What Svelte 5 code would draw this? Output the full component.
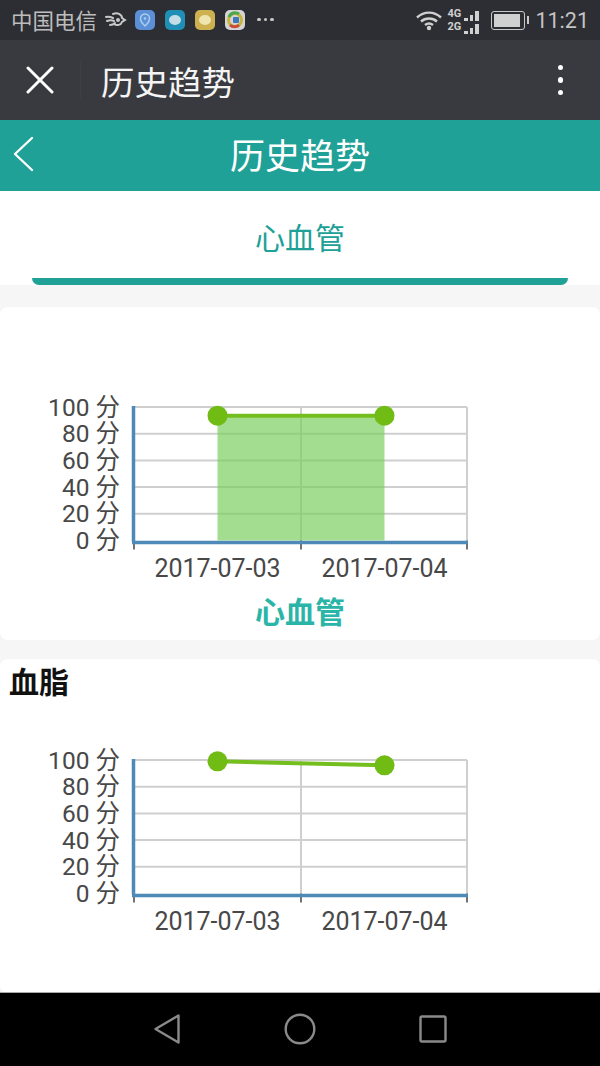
<script lang="ts">
  const LEVELS = [100, 80, 60, 40, 20, 0];
  const TOP = 20;
  const STEP = 26.7;
  const BASE = TOP + STEP * 5;
  const LEFT = 134;
  const MID = 301;
  const RIGHT = 467;
  const P1 = 217.5;
  const P2 = 384.5;

  const y = (v: number) => BASE - (v / 100) * STEP * 5;
</script>

{#snippet chart(a: number, b: number, area: boolean)}
  <svg class="chart" viewBox="0 0 600 200" width="600" height="200">
    {#each LEVELS as v, i}
      <text class="ylabel" x="120" y={TOP + STEP * i + 8.5} text-anchor="end">{v} 分</text>
      {#if v > 0}
        <line x1={LEFT} x2={RIGHT} y1={y(v)} y2={y(v)} class="grid" />
      {/if}
    {/each}
    <line x1={MID} x2={MID} y1={TOP} y2={BASE} class="grid" />
    <line x1={RIGHT} x2={RIGHT} y1={TOP} y2={BASE} class="grid" />
    {#if area}
      <rect x={P1} y={y(a)} width={P2 - P1} height={BASE - y(a)} fill="#77cd5c" opacity="0.68" />
    {/if}
    <line x1={LEFT} x2={LEFT} y1={BASE} y2={BASE + 9} class="tick" />
    <line x1={MID} x2={MID} y1={BASE} y2={BASE + 9} class="tick" />
    <line x1={RIGHT} x2={RIGHT} y1={BASE} y2={BASE + 9} class="tick" />
    <line x1="133.5" x2="133.5" y1={TOP - 1} y2={BASE + 1} class="axis" />
    <line x1="132" x2="468" y1={BASE + 2} y2={BASE + 2} class="axis" />
    <line x1={P1} x2={P2} y1={y(a)} y2={y(b)} class="series" />
    <circle cx={P1} cy={y(a)} r="10" fill="#70bb14" />
    <circle cx={P2} cy={y(b)} r="10" fill="#70bb14" />
    <text class="xlabel" x={P1} y={BASE + 36} text-anchor="middle">2017-07-03</text>
    <text class="xlabel" x={P2} y={BASE + 36} text-anchor="middle">2017-07-04</text>
  </svg>
{/snippet}

<div class="page">
  <div class="status">
    <span class="carrier">中国电信</span>
    <svg class="bird" width="22" height="16" viewBox="0 0 22 16">
      <path d="M1 5c3-1 5 0 7 1M2 9c3-1 5-1 7 0M5 13c2 0 4-1 5-2M8 2c5-2 9 1 9 4l3 2-3 2c-1 3-5 4-8 2" fill="none" stroke="#c8c8c8" stroke-width="2" stroke-linecap="round" />
      <circle cx="13" cy="8" r="2" fill="#c8c8c8" />
    </svg>
    <div class="apps">
      <span class="app blue">
        <svg width="12" height="14" viewBox="0 0 12 14"><path d="M6 1a4.500 4.500 0 0 1 4.500 4.500C10.500 9 6 13 6 13S1.500 9 1.500 5.500A4.500 4.500 0 0 1 6 1z" fill="none" stroke="#a8d0ee" stroke-width="1.500" /><circle cx="6" cy="5.500" r="1.300" fill="#a8d0ee" /></svg>
      </span>
      <span class="app cyan"><i class="bubble"></i></span>
      <span class="app yellow"><i class="bubble warm"></i></span>
      <span class="app tencent">
        <svg width="20" height="20" viewBox="0 0 20 20">
          <circle cx="10" cy="10" r="6.500" fill="none" stroke="#c9b53c" stroke-width="3" />
          <path d="M4 7a6.500 6.500 0 0 1 10-3" fill="none" stroke="#4da64d" stroke-width="3" />
          <path d="M5 15a6.500 6.500 0 0 0 9 0" fill="none" stroke="#c94f3a" stroke-width="3" />
          <rect x="8" y="7" width="6" height="6" rx="1" fill="#3f78b8" />
        </svg>
      </span>
    </div>
    <div class="more"><i></i><i></i><i></i></div>
    <div class="status-right">
      <svg width="28" height="22" viewBox="0 0 28 22">
        <path d="M2 8.500c7-6.500 17-6.500 24 0M6 12.500c4.500-4 11.500-4 16 0M10 16c2.500-2 5.500-2 8 0" fill="none" stroke="#d0d0d0" stroke-width="2.400" />
        <circle cx="14" cy="19" r="2.200" fill="#d0d0d0" />
      </svg>
      <div class="signal">
        <div class="sig-row"><span>4G</span><i style="height:3px"></i><i style="height:6px"></i><i style="height:10px"></i></div>
        <div class="sig-row"><span>2G</span><i style="height:3px"></i><i style="height:6px"></i><i style="height:10px"></i></div>
      </div>
      <div class="battery"><i></i></div>
      <span class="time">11:21</span>
    </div>
  </div>

  <div class="wxbar">
    <svg class="close" width="28" height="28" viewBox="0 0 28 28">
      <path d="M2 2l24 24M26 2L2 26" stroke="#fff" stroke-width="3" stroke-linecap="round" />
    </svg>
    <span class="divider"></span>
    <span class="wxtitle">历史趋势</span>
    <div class="dots"><i></i><i></i><i></i></div>
  </div>

  <header class="head">
    <svg class="back" width="22" height="36" viewBox="0 0 22 36">
      <path d="M20 2L3 18l17 16" fill="none" stroke="#fff" stroke-width="2.400" stroke-linecap="round" stroke-linejoin="round" />
    </svg>
    <span>历史趋势</span>
  </header>

  <nav class="tab">
    <span>心血管</span>
    <i class="tab-line"></i>
  </nav>

  <section class="card first">
    {@render chart(93.500, 93.500, true)}
    <h3>心血管</h3>
  </section>

  <section class="card second">
    <h2>血脂</h2>
    {@render chart(99, 96, false)}
  </section>

  <div class="softkeys">
    <svg width="28" height="32" viewBox="0 0 28 32">
      <path d="M25.500 2.500v27L2.500 16z" fill="none" stroke="#8a8a8a" stroke-width="2.400" stroke-linejoin="round" />
    </svg>
    <svg width="32" height="32" viewBox="0 0 32 32">
      <circle cx="16" cy="16" r="14.300" fill="none" stroke="#8a8a8a" stroke-width="2.400" />
    </svg>
    <svg width="28" height="28" viewBox="0 0 28 28">
      <rect x="1.500" y="1.500" width="25" height="25" rx="1.500" fill="none" stroke="#8a8a8a" stroke-width="2.400" />
    </svg>
  </div>
</div>

<style>
  :global(body) {
    margin: 0;
    background: #f5f5f5;
  }

  .page {
    width: 600px;
    height: 1066px;
    overflow: hidden;
    display: flex;
    flex-direction: column;
    background: #f6f6f6;
    font-family: Roboto, "Noto Sans CJK SC", sans-serif;
  }

  .status {
    height: 40px;
    flex: none;
    display: flex;
    align-items: center;
    padding: 0 11px;
    background: #2d2e33;
    color: #bdbdbd;
    box-sizing: border-box;
  }
  .carrier { font-size: 21.500px; width: 86px; margin-top: -2px; }
  .bird { margin-left: 8px; }
  .apps { display: flex; gap: 10px; margin-left: 8px; margin-top: -1px; }
  .app {
    width: 20px;
    height: 20px;
    border-radius: 5px;
    display: flex;
    align-items: center;
    justify-content: center;
  }
  .blue { background: #5c8fd6; }
  .cyan { background: #1f8fb5; }
  .yellow { background: #cdb04f; }
  .tencent { background: #d5d5d5; }
  .bubble { width: 12px; height: 10px; border-radius: 50%; background: #c5dde8; }
  .bubble.warm { background: #f0e4b0; }
  .more { margin-left: 12px; display: flex; gap: 3px; margin-top: -1px; }
  .more i { width: 3.500px; height: 3.500px; border-radius: 50%; background: #c8c8c8; }
  .status-right { margin-left: auto; display: flex; align-items: center; gap: 4px; }
  .signal { display: flex; flex-direction: column; gap: 0; width: 36px; margin-top: 1px; }
  .sig-row { display: flex; align-items: flex-end; gap: 2px; height: 13px; }
  .sig-row span { font-size: 11px; font-weight: 700; line-height: 11px; margin-right: 1px; align-self: flex-start; color: #d0d0d0; }
  .sig-row i { width: 3.500px; background: #d0d0d0; }
  .battery {
    width: 34px;
    height: 19px;
    margin-left: 4px;
    border: 1.500px solid #c8c8c8;
    border-radius: 3px;
    padding: 2px;
    box-sizing: border-box;
    position: relative;
  }
  .battery i { display: block; width: 26px; height: 100%; background: #d0d0d0; }
  .battery::after {
    content: "";
    position: absolute;
    right: -5px;
    top: 4px;
    width: 2px;
    height: 8px;
    background: #c8c8c8;
  }
  .time { font-size: 21.500px; margin-left: 6px; color: #c4c4c4; }

  .wxbar {
    height: 80px;
    flex: none;
    display: flex;
    align-items: center;
    background: #393a3f;
    color: #fff;
    position: relative;
  }
  .close { margin-left: 26px; }
  .divider { width: 1px; height: 36px; margin-left: 26px; background: #3f4045; }
  .wxtitle { font-size: 33.500px; margin-left: 20px; color: #f4f4f4; }
  .dots { margin-left: auto; margin-right: 37px; display: flex; flex-direction: column; gap: 7px; }
  .dots i { width: 5.500px; height: 5.500px; border-radius: 50%; background: #fff; }

  .head {
    height: 71px;
    flex: none;
    display: flex;
    align-items: center;
    justify-content: center;
    background: #20a197;
    color: #fff;
    font-size: 35px;
    padding-bottom: 5px;
    box-sizing: border-box;
    position: relative;
  }
  .back { position: absolute; left: 12px; top: 16px; }

  .tab {
    height: 94px;
    flex: none;
    display: flex;
    flex-direction: column;
    align-items: center;
    background: #fff;
    color: #20a197;
    font-size: 30px;
    box-sizing: border-box;
    padding-top: 23px;
  }
  .tab-line {
    width: 536px;
    height: 7px;
    margin-top: auto;
    background: #20a197;
    border-radius: 0 0 8px 8px;
  }

  .card {
    background: #fff;
    border-radius: 8px;
    flex: none;
  }
  .first { margin-top: 22px; height: 333px; padding-top: 80px; box-sizing: border-box; }
  .second { margin-top: 19px; height: 334px; position: relative; box-sizing: border-box; padding-top: 1px; }
  .card h3 {
    margin: 8px 0 0;
    font-size: 30px;
    font-weight: 700;
    line-height: 36px;
    text-align: center;
    color: #2bb5a8;
  }
  .card h2 {
    margin: 3px 0 37px 9px;
    font-size: 30px;
    font-weight: 700;
    line-height: 40px;
    color: #111;
  }
  .chart { display: block; }
  .ylabel { font-size: 24.500px; fill: #484848; font-family: Roboto, "Noto Sans CJK SC", sans-serif; }
  .xlabel { font-size: 25px; fill: #484848; font-family: Roboto, sans-serif; }
  .grid { stroke: #cfcfcf; stroke-width: 2; }
  .tick { stroke: #444; stroke-width: 1.500; }
  .axis { stroke: #4d8ab8; stroke-width: 3.500; }
  .series { stroke: #74be1e; stroke-width: 4; }

  .softkeys {
    position: absolute;
    left: 0;
    top: 992px;
    width: 600px;
    height: 74px;
    box-sizing: border-box;
    border-top: 1px solid #aaa;
    background: #000;
    display: block;
  }
  .softkeys svg { position: absolute; top: 20px; }
  .softkeys svg:nth-child(1) { left: 153px; }
  .softkeys svg:nth-child(2) { left: 284px; }
  .softkeys svg:nth-child(3) { left: 419px; top: 22px; }
</style>
